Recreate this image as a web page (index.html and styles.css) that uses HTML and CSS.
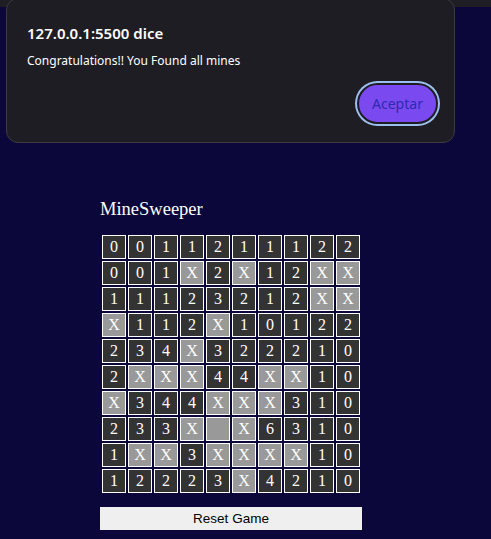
FILE: index.html
```html
<!DOCTYPE html>
<html lang="es">
<head>
<meta charset="utf-8">
<title>MineSweeper</title>
<link rel="stylesheet" href="styles.css">
</head>
<body>
<div class="topbar"></div>
<main class="game">
  <h1 class="title">MineSweeper</h1>
  <table class="board">
    <tr><td>0</td><td>0</td><td>1</td><td>1</td><td>2</td><td>1</td><td>1</td><td>1</td><td>2</td><td>2</td></tr>
    <tr><td>0</td><td>0</td><td>1</td><td class="mine">X</td><td>2</td><td class="mine">X</td><td>1</td><td>2</td><td class="mine">X</td><td class="mine">X</td></tr>
    <tr><td>1</td><td>1</td><td>1</td><td>2</td><td>3</td><td>2</td><td>1</td><td>2</td><td class="mine">X</td><td class="mine">X</td></tr>
    <tr><td class="mine">X</td><td>1</td><td>1</td><td>2</td><td class="mine">X</td><td>1</td><td>0</td><td>1</td><td>2</td><td>2</td></tr>
    <tr><td>2</td><td>3</td><td>4</td><td class="mine">X</td><td>3</td><td>2</td><td>2</td><td>2</td><td>1</td><td>0</td></tr>
    <tr><td>2</td><td class="mine">X</td><td class="mine">X</td><td class="mine">X</td><td>4</td><td>4</td><td class="mine">X</td><td class="mine">X</td><td>1</td><td>0</td></tr>
    <tr><td class="mine">X</td><td>3</td><td>4</td><td>4</td><td class="mine">X</td><td class="mine">X</td><td class="mine">X</td><td>3</td><td>1</td><td>0</td></tr>
    <tr><td>2</td><td>3</td><td>3</td><td class="mine">X</td><td class="mine"></td><td class="mine">X</td><td>6</td><td>3</td><td>1</td><td>0</td></tr>
    <tr><td>1</td><td class="mine">X</td><td class="mine">X</td><td>3</td><td class="mine">X</td><td class="mine">X</td><td class="mine">X</td><td class="mine">X</td><td>1</td><td>0</td></tr>
    <tr><td>1</td><td>2</td><td>2</td><td>2</td><td>3</td><td class="mine">X</td><td>4</td><td>2</td><td>1</td><td>0</td></tr>
  </table>
  <button class="reset" type="button">Reset Game</button>
</main>
<div class="dialog" role="alertdialog">
  <h2 class="dialog-title">127.0.0.1:5500 dice</h2>
  <p class="dialog-msg">Congratulations!! You Found all mines</p>
  <div class="dialog-actions">
    <button class="accept" type="button">Aceptar</button>
  </div>
</div>
</body>
</html>
```
FILE: styles.css
```css
html, body {
  margin: 0;
  padding: 0;
  background: #0c073a;
  height: 100%;
}
body {
  font-family: "Liberation Serif", "Times New Roman", serif;
  color: #fff;
  overflow: hidden;
}
.topbar {
  position: absolute;
  left: 0;
  top: 0;
  width: 100%;
  height: 7px;
  background: #1f1e24;
}
.game {
  padding: 198px 0 0 100px;
  display: flex;
  flex-direction: column;
  align-items: flex-start;
}
.title {
  margin: 0;
  font-weight: normal;
  font-size: 18.5px;
  line-height: 22px;
  height: 35px;
}
.board {
  border-collapse: separate;
  border-spacing: 2px;
}
.board td {
  width: 22px;
  height: 22px;
  padding: 0;
  border: 1px solid #fff;
  background: #333333;
  color: #fff;
  text-align: center;
  vertical-align: middle;
  font-size: 16px;
  line-height: 22px;
}
.board td.mine {
  background: #999999;
}
.reset {
  margin-top: 12px;
  width: 262px;
  height: 23px;
  border: none;
  background: #efefef;
  color: #000;
  font-family: "Liberation Sans", Arial, sans-serif;
  font-size: 13.5px;
  padding: 0;
}
.dialog {
  position: absolute;
  left: 6px;
  top: -2px;
  width: 449px;
  height: 145px;
  box-sizing: border-box;
  background: #1e1d24;
  border: 1px solid #3c3b42;
  border-radius: 12px;
  padding: 24px 16px 0 20px;
  font-family: "Noto Sans", "Open Sans", sans-serif;
  color: #fff;
}
.dialog-title {
  margin: 0;
  font-size: 15px;
  font-weight: 600;
  line-height: 20px;
}
.dialog-msg {
  margin: 10px 0 0 0;
  font-size: 12px;
  line-height: 16px;
}
.dialog-actions {
  display: flex;
  justify-content: flex-end;
  margin-top: 14px;
}
.accept {
  width: 81px;
  height: 41px;
  border-radius: 21px;
  background: #7b49f0;
  border: 2px solid #1e1d24;
  box-shadow: 0 0 0 2px #9cc0ee;
  color: #2c2ab0;
  font-family: "Noto Sans", "Open Sans", sans-serif;
  font-size: 14px;
  padding: 0;
}
```
